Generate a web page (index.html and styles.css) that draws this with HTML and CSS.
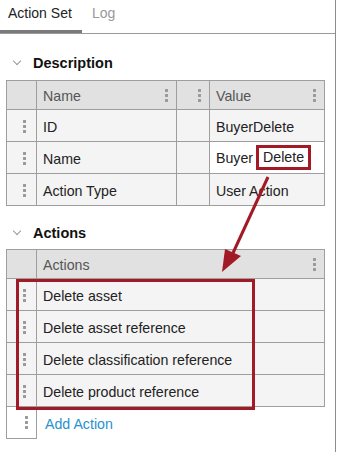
FILE: index.html
```html
<!DOCTYPE html>
<html lang="en">
<head>
    <meta charset="UTF-8">
    <title>Action Set</title>
    <link rel="stylesheet" href="styles.css">
</head>
<body>
    <div class="panel">
        <div class="tabs">
            <span class="tab active">Action Set</span>
            <span class="tab">Log</span>
        </div>

        <div class="section-title"><span class="chevron"></span>Description</div>
        <table class="grid desc">
            <colgroup>
                <col class="w-handle">
                <col class="w-name">
                <col class="w-mid">
                <col>
            </colgroup>
            <tr class="head">
                <td class="handle"></td>
                <td>Name<span class="dots"></span></td>
                <td><span class="dots"></span></td>
                <td>Value<span class="dots"></span></td>
            </tr>
            <tr>
                <td class="handle"><span class="dots"></span></td>
                <td>ID</td>
                <td></td>
                <td>BuyerDelete</td>
            </tr>
            <tr>
                <td class="handle"><span class="dots"></span></td>
                <td>Name</td>
                <td></td>
                <td class="editing">Buyer<span class="mark-word">Delete</span></td>
            </tr>
            <tr>
                <td class="handle"><span class="dots"></span></td>
                <td>Action Type</td>
                <td></td>
                <td>User Action</td>
            </tr>
        </table>

        <div class="section-title actions-title"><span class="chevron"></span>Actions</div>
        <table class="grid acts">
            <colgroup>
                <col class="w-handle">
                <col>
            </colgroup>
            <tr class="head">
                <td class="handle"></td>
                <td>Actions<span class="dots"></span></td>
            </tr>
            <tr>
                <td class="handle"><span class="dots"></span></td>
                <td>Delete asset</td>
            </tr>
            <tr>
                <td class="handle"><span class="dots"></span></td>
                <td>Delete asset reference</td>
            </tr>
            <tr>
                <td class="handle"><span class="dots"></span></td>
                <td>Delete classification reference</td>
            </tr>
            <tr>
                <td class="handle"><span class="dots"></span></td>
                <td>Delete product reference</td>
            </tr>
            <tr class="add">
                <td class="handle"><span class="dots"></span></td>
                <td><a href="#" class="add-link">Add Action</a></td>
            </tr>
        </table>
    </div>

    <!-- callout overlays -->
    <div class="mark mark-rows"></div>
    <svg class="arrow" width="341" height="452" viewBox="0 0 341 452">
        <line x1="268" y1="177" x2="233" y2="253" stroke="#a11a26" stroke-width="3"/>
        <polygon points="222,272 225,249 241,256" fill="#a11a26"/>
    </svg>
</body>
</html>
```

FILE: styles.css
```css
body {
    margin: 0;
    font-family: "Liberation Sans", Arial, sans-serif;
    font-size: 14px;
    color: #222;
    background: #fff;
    width: 341px;
    height: 452px;
    overflow: hidden;
    position: relative;
}
.panel {
    width: 335px;
    height: 452px;
    border-right: 1px solid #8c8c8c;
}
.tabs {
    border-bottom: 1px solid #9a9a9a;
    display: flex;
    box-sizing: border-box;
    height: 34px;
}
.tab {
    padding: 5px 8px 0 8px;
    color: #999;
    font-size: 14px;
    margin-right: 2px;
}
.tab.active {
    color: #222;
    border-bottom: 3px solid #7a7a7a;
    width: 66px;
}
.section-title {
    display: flex;
    align-items: center;
    font-weight: bold;
    font-size: 14.5px;
    color: #111;
    height: 20px;
    margin-top: 19px;
    margin-bottom: 7px;
    padding-left: 33px;
    position: relative;
}
.chevron {
    position: absolute;
    left: 14px;
    top: 5px;
    width: 5px;
    height: 5px;
    border-right: 1px solid #999;
    border-bottom: 1px solid #999;
    transform: rotate(45deg);
}
.actions-title {
    margin-top: 17px;
    margin-bottom: 6px;
}
.grid {
    margin-left: 6px;
    border-collapse: collapse;
    width: 319px;
    table-layout: fixed;
}
.w-handle { width: 30px; }
.w-name { width: 140px; }
.w-mid { width: 33px; }
.grid td {
    border: 1px solid #9e9e9e;
    height: 29px;
    padding: 2px 0 0 6px;
    background: #f4f4f4;
    position: relative;
    white-space: nowrap;
    font-size: 14.2px;
}
.grid .head td {
    background: #e1e1e1;
    color: #555;
    height: 26px;
}
.grid td.handle {
    padding: 0;
}
.grid td.editing {
    background: #fff;
}
.mark-word {
    display: inline-block;
    margin-left: 3px;
    padding: 0 4px;
    line-height: 19px;
    border: 3px solid #a11a26;
    vertical-align: middle;
    margin-top: -3px;
}
.dots {
    position: absolute;
    right: 8px;
    top: 50%;
    margin-top: -7px;
    width: 3px;
    height: 14px;
    background: radial-gradient(circle, #999 1.4px, transparent 1.6px) 0 0 / 3px 5px repeat-y;
}
.handle .dots {
    right: auto;
    left: 16px;
}
.add td {
    background: #fff;
    border: none;
}
.add td.handle {
    border: 1px solid #9e9e9e;
    border-top: none;
}
.add td.handle .dots {
    left: 18px;
}
.add-link {
    color: #2a90cf;
    text-decoration: none;
    padding-left: 2px;
}
.mark {
    position: absolute;
    border: 3px solid #a11a26;
    box-sizing: border-box;
}
.mark-rows {
    left: 16px;
    top: 279px;
    width: 239px;
    height: 131px;
}
.arrow {
    position: absolute;
    left: 0;
    top: 0;
}
```
